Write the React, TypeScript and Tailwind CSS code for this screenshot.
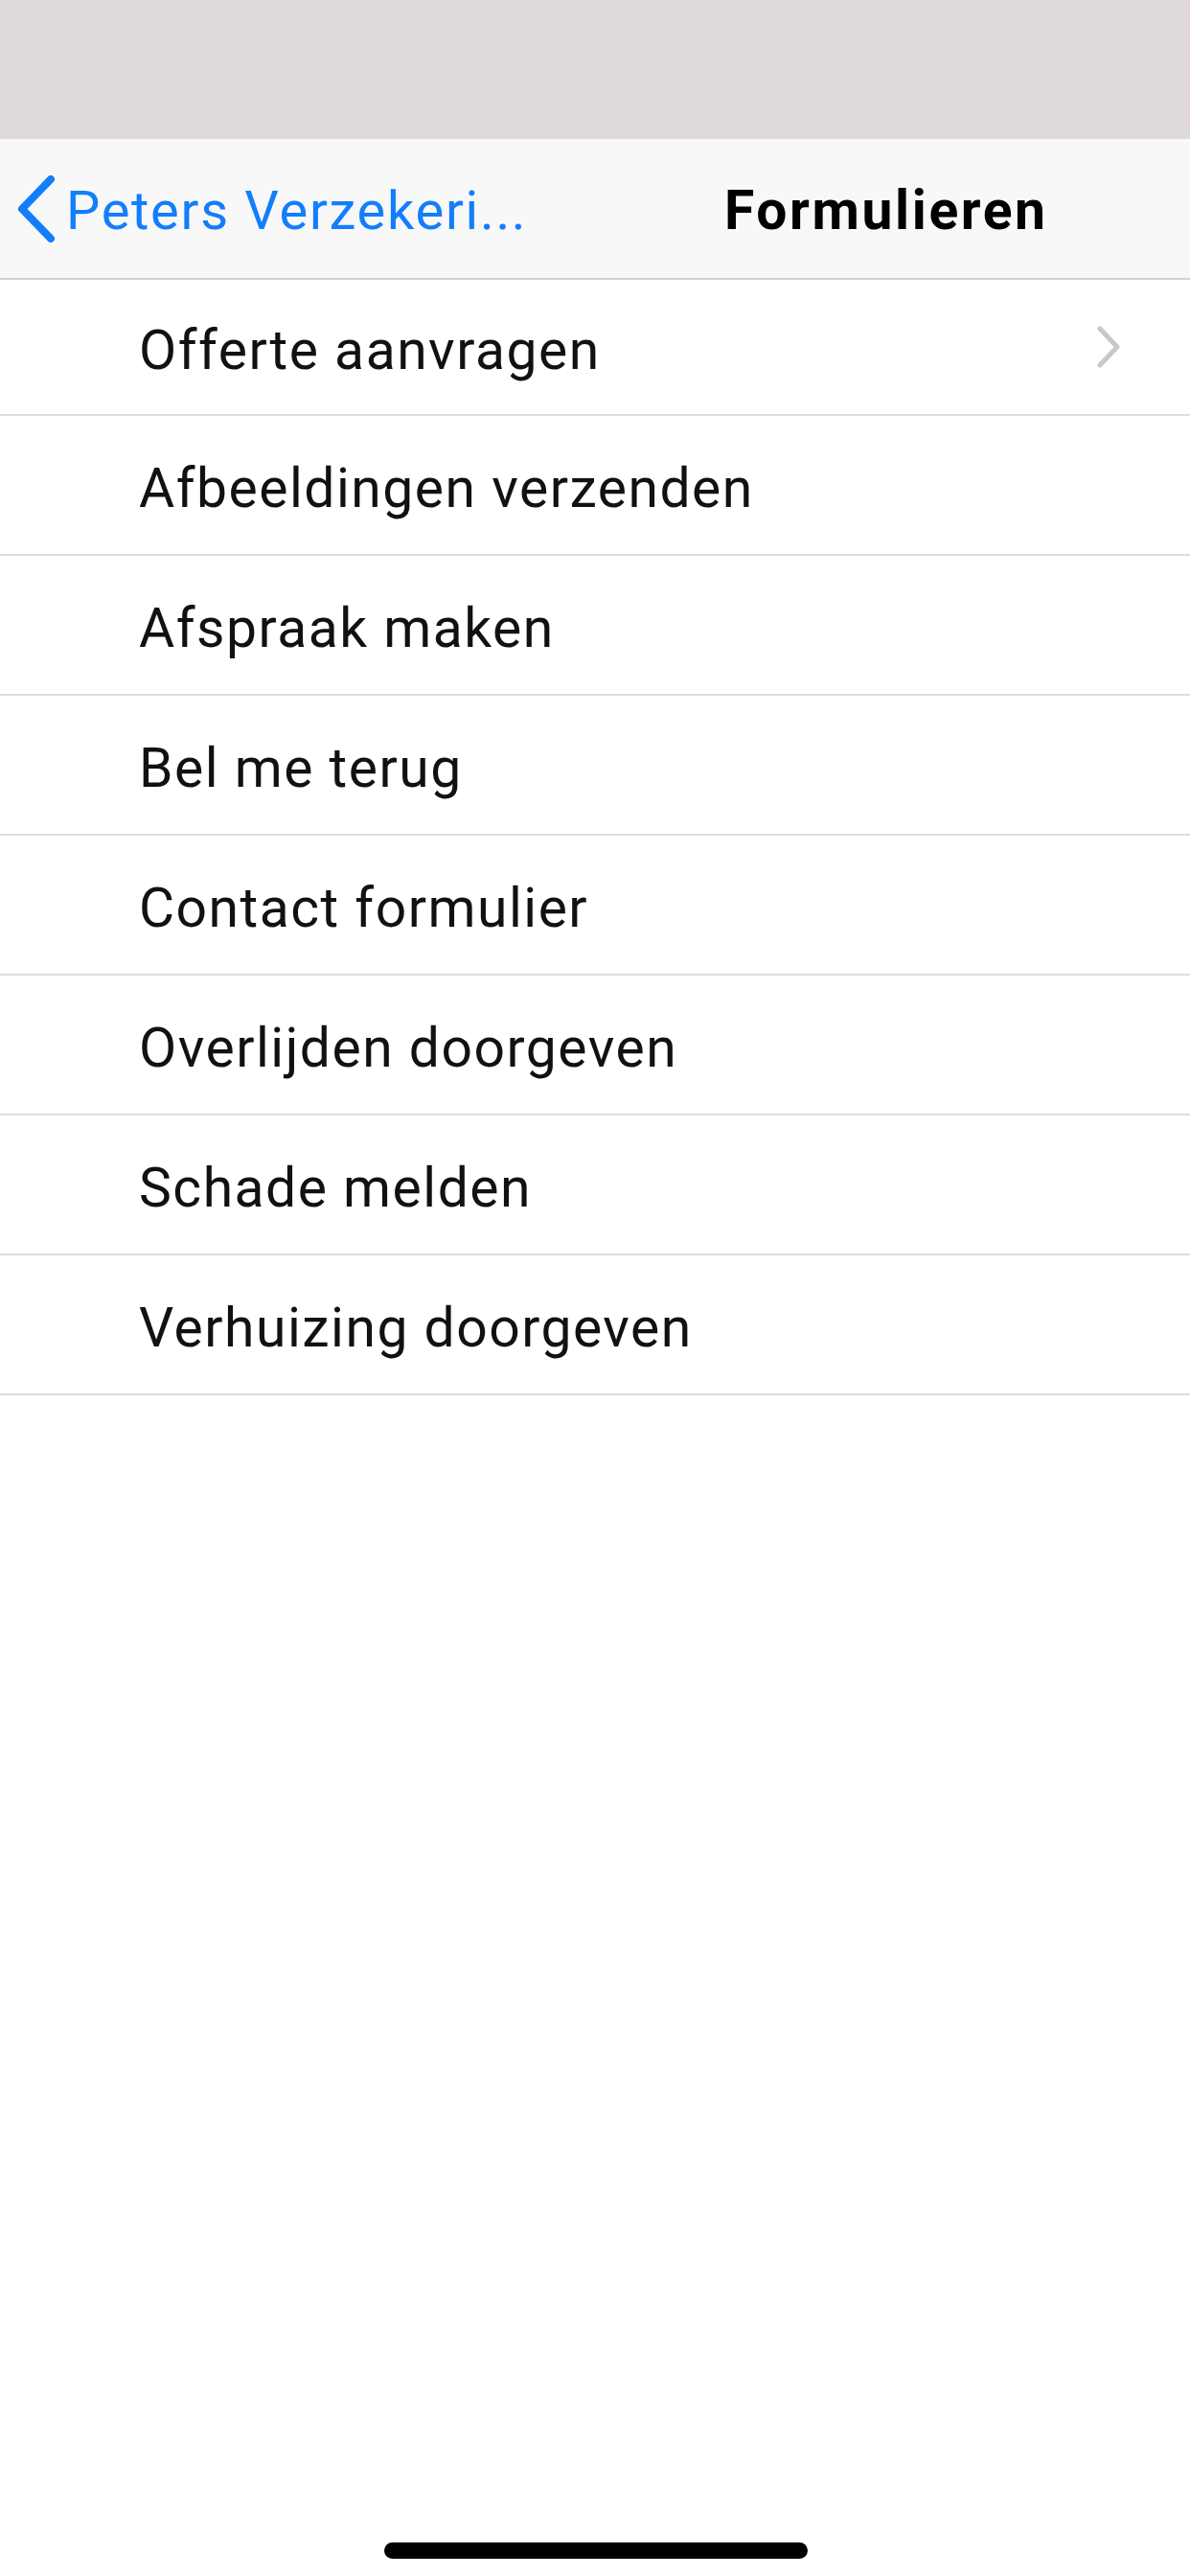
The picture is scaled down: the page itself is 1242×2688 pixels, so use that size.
const items = [
  'Offerte aanvragen',
  'Afbeeldingen verzenden',
  'Afspraak maken',
  'Bel me terug',
  'Contact formulier',
  'Overlijden doorgeven',
  'Schade melden',
  'Verhuizing doorgeven',
];

export default function App() {
  return (
    <div className="relative flex h-[2688px] w-[1242px] flex-col bg-white font-['Roboto',sans-serif]">
      <div className="h-[145px] bg-[#dfd9d9]" />

      <header className="flex h-[147px] items-center border-b-2 border-[#d3d3d3] bg-[#f8f8f8]">
        <div className="flex w-[756px] items-center pl-[18px]">
          <svg width="40" height="70" viewBox="0 0 40 70" className="shrink-0">
            <path d="M35 4 L5 35 L35 66" fill="none" stroke="#137efb" strokeWidth="8" strokeLinecap="round" strokeLinejoin="round" />
          </svg>
          <span className="ml-[11px] pt-[4px] text-[56px] leading-none tracking-[1.7px] text-[#137efb]">Peters Verzekeri...</span>
        </div>
        <span className="pt-[4px] text-[57px] font-bold leading-none tracking-[2.6px] text-black">Formulieren</span>
      </header>

      <ul className="flex flex-col">
        {items.map((label, i) => (
          <li
            key={label}
            className={`flex items-center border-b-2 border-[#dcdcdc] pl-[145px] pr-[72px] ${i === 0 ? 'h-[142px]' : 'h-[146px]'}`}
          >
            <span className="flex-1 pt-[6px] text-[57px] leading-none tracking-[1.5px] text-[#111]">{label}</span>
            {i === 0 && (
              <svg width="26" height="44" viewBox="0 0 26 44">
                <path d="M4 3 L22 22 L4 41" fill="none" stroke="#c7c7cc" strokeWidth="5" strokeLinecap="round" strokeLinejoin="round" />
              </svg>
            )}
          </li>
        ))}
      </ul>

      <div className="absolute bottom-[18px] left-[401px] h-[17px] w-[442px] rounded-full bg-black" />
    </div>
  );
}
